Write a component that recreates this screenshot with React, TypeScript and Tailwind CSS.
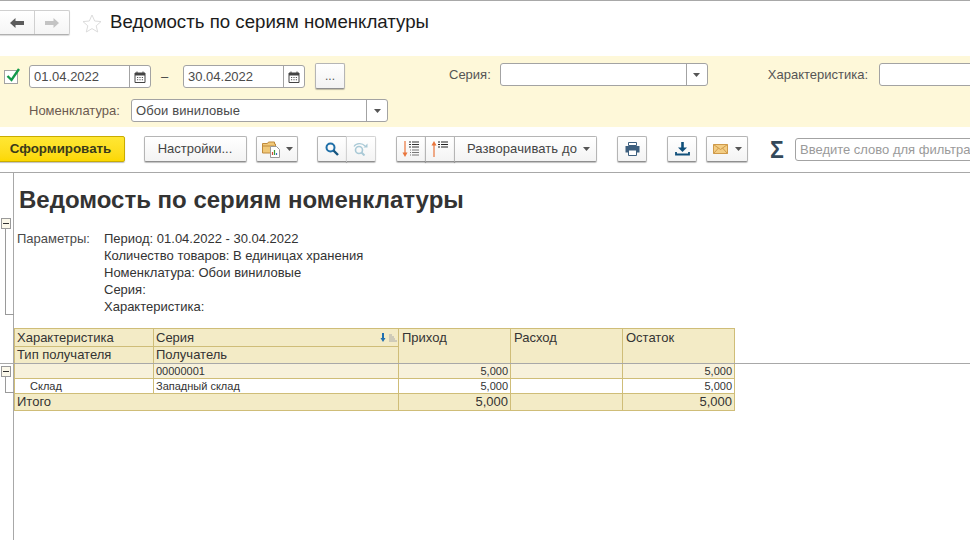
import React from 'react';

const font = "font-['Liberation_Sans',Arial,sans-serif]";
const btn = 'flex shrink-0 items-center justify-center h-[26px] rounded-[2px] border border-[#b5b5b5] border-b-[#8f8f8f] bg-gradient-to-b from-white to-[#f3f3f3] shadow-[0_1px_1px_rgba(0,0,0,0.25)]';

const Caret = ({ className = '' }: { className?: string }) => (
  <svg width="7" height="4" viewBox="0 0 7 4" className={className}>
    <path d="M0 0h7L3.5 4z" fill="#555" />
  </svg>
);

const CalendarIcon = () => (
  <svg width="12" height="12" viewBox="0 0 12 12">
    <path d="M1 2h10v9.500H1z" fill="none" stroke="#444" />
    <path d="M1 2h10v2.500H1z" fill="#444" />
    <path d="M3 0.500v2M9 0.500v2" stroke="#444" />
    <path d="M3 6h1.200v1H3zM5.400 6h1.200v1H5.400zM7.800 6H9v1H7.800zM3 8.300h1.200v1H3zM5.400 8.300h1.200v1H5.400zM7.800 8.300H9v1H7.800z" fill="#555" />
  </svg>
);

const DateField = ({ value }: { value: string }) => (
  <div className="flex h-[23px] w-[122px] shrink-0 rounded-[3px] border border-[#a3a3a3] bg-white">
    <div className="flex-1 pl-[4px] text-[13px] leading-[21px] text-[#4a4a4a]">{value}</div>
    <div className="flex w-[21px] items-center justify-center border-l border-[#a3a3a3]">
      <CalendarIcon />
    </div>
  </div>
);

const SelectField = ({ width, value }: { width: string; value?: string }) => (
  <div className={`flex h-[23px] shrink-0 ${width} rounded-[3px] border border-[#a3a3a3] bg-white`}>
    <div className="flex-1 pl-[4px] text-[13px] leading-[21px] tracking-[0.1px] text-[#4a4a4a]">{value}</div>
    <div className="flex w-[21px] items-center justify-center border-l border-[#a3a3a3]">
      <Caret />
    </div>
  </div>
);

const Minus = () => (
  <div className="flex h-[11px] w-[10px] items-center justify-center border border-[#9a9a9a] bg-[#fbf8ea]">
    <div className="h-px w-[6px] bg-[#333]" />
  </div>
);

export default function App() {
  return (
    <div className={`${font} relative flex h-[540px] w-[970px] flex-col overflow-hidden bg-white text-[#333]`}>
      {/* header */}
      <div className="flex h-[56px] shrink-0 items-start border-t border-[#a8a8a8] pt-[9px]">
        <div className="-ml-[2px] flex h-[25px] w-[72px] shrink-0 rounded-[2px] border border-[#d0d0d0] border-b-[#b0b0b0] bg-gradient-to-b from-white to-[#f5f5f5] shadow-[0_1px_1px_rgba(0,0,0,0.15)]">
          <div className="flex w-[36px] items-center justify-center border-r border-[#d0d0d0]">
            <svg width="14" height="10" viewBox="0 0 14 10">
              <path d="M0 5l5.500-5v3H14v4H5.500v3z" fill="#5c5c5c" />
            </svg>
          </div>
          <div className="flex flex-1 items-center justify-center">
            <svg width="14" height="10" viewBox="0 0 14 10">
              <path d="M14 5L8.500 0v3H0v4h8.500v3z" fill="#c4c4c4" />
            </svg>
          </div>
        </div>
        <svg width="20" height="19" viewBox="0 0 20 19" className="ml-[12px] mt-[4px] shrink-0">
          <path d="M10 1l2.700 6 6.300.6-4.800 4.200 1.500 6.200L10 14.600 4.300 18l1.500-6.200L1 7.600 7.300 7z" fill="none" stroke="#dcdcdc" />
        </svg>
        <div className="ml-[8px] text-[18.67px] leading-[24px] text-[#1c1c1c]">Ведомость по сериям номенклатуры</div>
      </div>

      {/* filter panel */}
      <div className="flex h-[71px] shrink-0 flex-col bg-[#fef8d9] pt-[7px] text-[13px]">
        <div className="flex h-[26px] items-start">
          <div className="relative ml-[4px] mt-[7px] h-[14px] w-[14px] shrink-0 border border-[#a3a3a3] bg-white">
            <svg width="16" height="15" viewBox="0 0 16 15" className="absolute -top-[3px] left-0">
              <path d="M2.500 8l4 4L14 1" fill="none" stroke="#12994a" strokeWidth="2.400" />
            </svg>
          </div>
          <div className="ml-[11px] mt-[2px] flex shrink-0 items-center">
            <DateField value="01.04.2022" />
            <div className="w-[32px] pl-[10px] text-[13px] text-[#444]">–</div>
            <DateField value="30.04.2022" />
          </div>
          <div className={`${btn} ml-[10px] w-[30px] text-[12px] text-[#555]`}>...</div>
          <div className="ml-[104px] shrink-0 leading-[23px] text-[#555]">Серия:</div>
          <div className="ml-[9px] shrink-0">
            <SelectField width="w-[208px]" />
          </div>
          <div className="ml-[60px] shrink-0 leading-[23px] text-[#555]">Характеристика:</div>
          <div className="ml-[11px] h-[23px] w-[120px] shrink-0 rounded-[3px] border border-[#a3a3a3] bg-white" />
        </div>
        <div className="mt-[10px] flex h-[23px] items-start pl-[29px]">
          <div className="w-[102px] shrink-0 leading-[23px] text-[#6b5a50]">Номенклатура:</div>
          <SelectField width="w-[257px]" value="Обои виниловые" />
        </div>
      </div>

      {/* toolbar */}
      <div className="flex h-[46px] shrink-0 items-start border-b border-[#a8a8a8] pt-[9px] text-[13px] text-[#444]">
        <div className="-ml-[2px] flex h-[26px] w-[127px] shrink-0 items-center justify-center rounded-[2px] border border-[#c9ac00] bg-gradient-to-b from-[#ffe733] to-[#fcd800] pr-[2px] text-[13.33px] font-bold text-[#3a3a1a] shadow-[0_1px_1px_rgba(0,0,0,0.25)]">
          Сформировать
        </div>
        <div className={`${btn} ml-[19px] w-[103px] pr-[1px]`}>Настройки...</div>
        <div className={`${btn} ml-[9px] w-[42px] gap-[5px]`}>
          <svg width="19" height="18" viewBox="0 0 19 18">
            <path d="M0.500 3.500h5l1-1.500h6v2h1v9h-13z" fill="#f0c878" stroke="#c08a3c" />
            <path d="M0.500 6h12" stroke="#c08a3c" />
            <path d="M8.500 6.500h6l3 3v8h-9z" fill="#fff" stroke="#999" />
            <path d="M10.500 15v-3" stroke="#d34a3a" strokeWidth="1.200" />
            <path d="M12.500 15v-5" stroke="#3a9a3a" strokeWidth="1.200" />
            <path d="M14.500 15v-2" stroke="#3a6ac0" strokeWidth="1.200" />
          </svg>
          <Caret />
        </div>
        <div className="ml-[19px] flex shrink-0">
          <div className={`${btn} w-[30px] rounded-r-none`}>
            <svg width="14" height="14" viewBox="0 0 14 14">
              <circle cx="5.500" cy="5.500" r="4" fill="none" stroke="#1f6fa8" strokeWidth="2" />
              <path d="M8.500 8.500l4.500 4.500" stroke="#16557f" strokeWidth="2.400" />
            </svg>
          </div>
          <div className={`${btn} -ml-px w-[30px] rounded-l-none border-[#d2d2d2]`}>
            <svg width="16" height="14" viewBox="0 0 16 14">
              <circle cx="6" cy="8" r="3.500" fill="none" stroke="#a9c9d6" strokeWidth="1.600" />
              <path d="M8.500 10.500l3 3" stroke="#a9c9d6" strokeWidth="2" />
              <path d="M1 4.500C3 1 9 0.500 12 4" fill="none" stroke="#a9c9d6" strokeWidth="1.200" />
              <path d="M14.500 1.500v4h-4z" fill="#a9c9d6" />
            </svg>
          </div>
        </div>
        <div className="ml-[20px] flex shrink-0">
          <div className={`${btn} w-[30px] rounded-r-none`}>
            <svg width="18" height="18" viewBox="0 0 18 18">
              <path d="M3 1v13" stroke="#e9753b" strokeWidth="1.200" />
              <path d="M0.500 12.500h5L3 17z" fill="#e9753b" />
              <path d="M7 2h2M10 2h7M7 4.500h2M10 4.500h7M7 7h2M10 7h7" stroke="#333" />
              <path d="M8 10h1M10 10h7M8 12.500h1M10 12.500h7M8 15h1M10 15h7" stroke="#777" />
            </svg>
          </div>
          <div className={`${btn} -ml-px w-[30px] rounded-none`}>
            <svg width="18" height="18" viewBox="0 0 18 18">
              <path d="M3 4v13" stroke="#e9753b" strokeWidth="1.200" />
              <path d="M0.500 5.500h5L3 1z" fill="#e9753b" />
              <path d="M7 2h2M10 2h7M7 4.500h2M10 4.500h7M7 7h2M10 7h7" stroke="#222" />
            </svg>
          </div>
          <div className={`${btn} -ml-px w-[143px] gap-[6px] rounded-l-none pl-[6px] tracking-[0.1px]`}>
            Разворачивать до
            <Caret />
          </div>
        </div>
        <div className={`${btn} ml-[20px] w-[30px]`}>
          <svg width="15" height="14" viewBox="0 0 15 14">
            <path d="M3.500 0.500h8v3h-8z" fill="#fff" stroke="#3d5f7e" />
            <path d="M0.500 4h14v6.500h-3V8h-8v2.500h-3z" fill="#3d5f7e" />
            <path d="M3.500 8h8v5.500h-8z" fill="#fff" stroke="#3d5f7e" />
          </svg>
        </div>
        <div className={`${btn} ml-[20px] w-[30px]`}>
          <svg width="15" height="14" viewBox="0 0 15 14">
            <path d="M7.500 0v7" stroke="#0f4f7a" strokeWidth="2.600" />
            <path d="M3 5.500h9L7.500 10z" fill="#0f4f7a" />
            <path d="M1 10v2.500h13V10" fill="none" stroke="#0f4f7a" strokeWidth="1.800" />
          </svg>
        </div>
        <div className={`${btn} ml-[9px] w-[42px] gap-[7px]`}>
          <svg width="15" height="10" viewBox="0 0 15 10">
            <path d="M0.500 0.500h14v9h-14z" fill="#f3cd84" stroke="#cf9a4a" />
            <path d="M0.500 0.500l7 5 7-5M0.500 9.500l5-5.500M14.500 9.500l-5-5.500" fill="none" stroke="#cf9a4a" />
          </svg>
          <Caret />
        </div>
        <div className="ml-[22px] mt-[1px] w-[14px] shrink-0 text-center text-[23px] font-bold leading-[26px] text-[#34495a]">Σ</div>
        <div className="ml-[11px] mt-[2px] h-[23px] w-[200px] shrink-0 whitespace-nowrap rounded-[3px] border border-[#a3a3a3] bg-white pl-[4px] text-[13px] leading-[21px] text-[#9a9a9a]">
          Введите слово для фильтра
        </div>
      </div>

      {/* report */}
      <div className="flex flex-1">
        <div className="flex w-[14px] shrink-0 flex-col border-r border-[#a8a8a8] pl-px pt-[45px]">
          <Minus />
          <div className="ml-[4px] h-[86px] w-[9px] border-b border-l border-[#9a9a9a]" />
          <div className="mt-[51px]">
            <Minus />
          </div>
          <div className="ml-[4px] h-[16px] w-[9px] border-b border-l border-[#9a9a9a]" />
        </div>
        <div className="flex-1">
          <div className="ml-[5px] mt-[12px] text-[24px] font-bold leading-[30px] text-[#333]">
            Ведомость по сериям номенклатуры
          </div>
          <div className="ml-[3px] mt-[15px] flex text-[13px] leading-[17px]">
            <div className="w-[87px] text-[#4a4a4a]">Параметры:</div>
            <div>
              <div>Период: 01.04.2022 - 30.04.2022</div>
              <div>Количество товаров: В единицах хранения</div>
              <div>Номенклатура: Обои виниловые</div>
              <div>Серия:</div>
              <div>Характеристика:</div>
            </div>
          </div>
          <div className="mt-[13px] grid w-[721px] grid-cols-[139px_245px_112px_112px_111px] border border-[#cfbd78] text-[13px]">
            <div className="h-[18px] border-b border-r border-[#cfbd78] bg-[#f3ebc6] pl-[2px] leading-[17px]">Характеристика</div>
            <div className="flex h-[18px] items-center justify-between border-b border-r border-[#cfbd78] bg-[#f3ebc6] pl-[2px] pr-[1px]">
              <span>Серия</span>
              <svg width="17" height="10" viewBox="0 0 17 10">
                <path d="M3 0v6" stroke="#1f6fb0" strokeWidth="2" />
                <path d="M0.500 5h5L3 9z" fill="#1f6fb0" />
                <path d="M9 2h3M9 4h5M9 6h6M9 8h8" stroke="#aaa" />
              </svg>
            </div>
            <div className="row-span-2 border-b border-r border-[#cfbd78] bg-[#f3ebc6] pl-[3px] leading-[17px]">Приход</div>
            <div className="row-span-2 border-b border-r border-[#cfbd78] bg-[#f3ebc6] pl-[3px] leading-[17px]">Расход</div>
            <div className="row-span-2 border-b border-[#cfbd78] bg-[#f3ebc6] pl-[3px] leading-[17px]">Остаток</div>
            <div className="h-[17px] border-b border-r border-[#cfbd78] bg-[#f3ebc6] pl-[2px] leading-[16px]">Тип получателя</div>
            <div className="h-[17px] border-b border-r border-[#cfbd78] bg-[#f3ebc6] pl-[2px] leading-[16px]">Получатель</div>

            <div className="h-[15px] border-b border-r border-[#cfbd78] bg-[#f7f1db]" />
            <div className="h-[15px] border-b border-r border-[#cfbd78] bg-[#f7f1db] pl-[2px] text-[11px] leading-[14px]">00000001</div>
            <div className="h-[15px] border-b border-r border-[#cfbd78] bg-[#f7f1db] pr-[2px] text-right text-[11px] leading-[14px]">5,000</div>
            <div className="h-[15px] border-b border-r border-[#cfbd78] bg-[#f7f1db]" />
            <div className="h-[15px] border-b border-[#cfbd78] bg-[#f7f1db] pr-[2px] text-right text-[11px] leading-[14px]">5,000</div>

            <div className="h-[15px] border-b border-r border-[#cfbd78] pl-[15px] text-[11px] leading-[14px]">Склад</div>
            <div className="h-[15px] border-b border-r border-[#cfbd78] pl-[2px] text-[11px] leading-[14px]">Западный склад</div>
            <div className="h-[15px] border-b border-r border-[#cfbd78] pr-[2px] text-right text-[11px] leading-[14px]">5,000</div>
            <div className="h-[15px] border-b border-r border-[#cfbd78]" />
            <div className="h-[15px] border-b border-[#cfbd78] pr-[2px] text-right text-[11px] leading-[14px]">5,000</div>

            <div className="col-span-2 h-[16px] border-r border-[#cfbd78] bg-[#f3ebc6] pl-[2px] leading-[16px]">Итого</div>
            <div className="h-[16px] border-r border-[#cfbd78] bg-[#f3ebc6] pr-[2px] text-right leading-[16px]">5,000</div>
            <div className="h-[16px] border-r border-[#cfbd78] bg-[#f3ebc6]" />
            <div className="h-[16px] bg-[#f3ebc6] pr-[2px] text-right leading-[16px]">5,000</div>
          </div>
        </div>
      </div>

      {/* group separator that runs across the report */}
      <div className="absolute left-0 right-0 top-[363px] h-px bg-[#a8a8a8]" />
    </div>
  );
}
